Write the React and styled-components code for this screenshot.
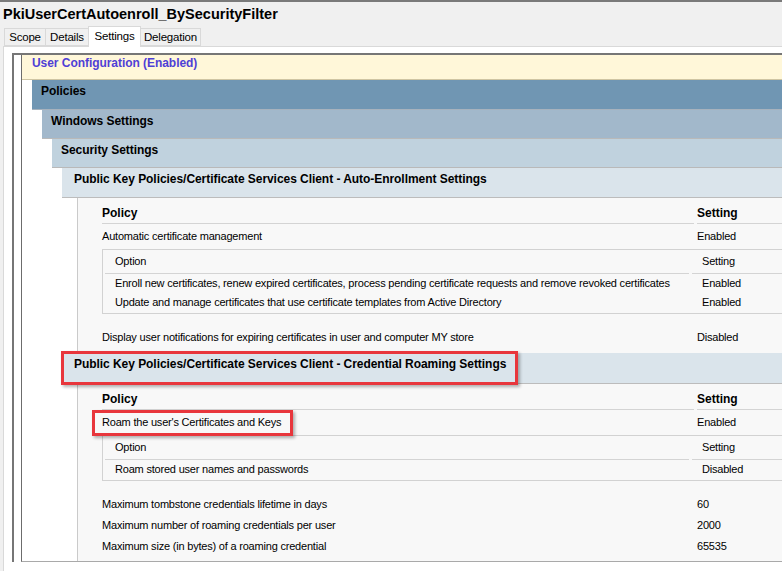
import React from 'react';
import styled, { createGlobalStyle } from 'styled-components';

const GlobalStyle = createGlobalStyle`
  html, body {
    margin: 0;
    padding: 0;
    background: #f0f0f0;
    overflow: hidden;
  }
  body {
    font-family: 'Liberation Sans', Arial, sans-serif;
    color: #000;
  }
`;

const autoEnroll = {
  policies: [{ name: 'Automatic certificate management', setting: 'Enabled' }],
  options: [
    {
      name: 'Enroll new certificates, renew expired certificates, process pending certificate requests and remove revoked certificates',
      setting: 'Enabled',
    },
    { name: 'Update and manage certificates that use certificate templates from Active Directory', setting: 'Enabled' },
  ],
  after: [{ name: 'Display user notifications for expiring certificates in user and computer MY store', setting: 'Disabled' }],
};

const roaming = {
  options: [{ name: 'Roam stored user names and passwords', setting: 'Disabled' }],
  after: [
    { name: 'Maximum tombstone credentials lifetime in days', setting: '60' },
    { name: 'Maximum number of roaming credentials per user', setting: '2000' },
    { name: 'Maximum size (in bytes) of a roaming credential', setting: '65535' },
  ],
};

const tabs = [
  { label: 'Scope', width: 42 },
  { label: 'Details', width: 44 },
  { label: 'Settings', width: 53 },
  { label: 'Delegation', width: 61 },
];

const OptionTable = ({ rows }) => (
  <OptionBox>
    <OptionGrid>
      <OptionHead>Option</OptionHead>
      <OptionHead>Setting</OptionHead>
      {rows.map((r) => (
        <React.Fragment key={r.name}>
          <OptionCell>{r.name}</OptionCell>
          <OptionCell>{r.setting}</OptionCell>
        </React.Fragment>
      ))}
    </OptionGrid>
  </OptionBox>
);

const App = () => {
  return (
    <Page>
      <GlobalStyle />
      <TitleBar>PkiUserCertAutoenroll_BySecurityFilter</TitleBar>
      <TabStrip>
        {tabs.map((t) => (
          <Tab key={t.label} $width={t.width} $active={t.label === 'Settings'}>{t.label}</Tab>
        ))}
      </TabStrip>
      <Panel>
        <Frame>
          <Tree>
            <Band $tone="user">User Configuration (Enabled)</Band>
            <Indent>
              <Band $tone="l1">Policies</Band>
              <Indent>
                <Band $tone="l2">Windows Settings</Band>
                <Indent>
                  <Band $tone="l3">Security Settings</Band>
                  <Indent>
                    <Band $tone="l4">Public Key Policies/Certificate Services Client - Auto-Enrollment Settings</Band>
                    <Body>
                      <PolicyGrid>
                        <HeadCell>Policy</HeadCell>
                        <HeadCell>Setting</HeadCell>
                        {autoEnroll.policies.map((r) => (
                          <React.Fragment key={r.name}>
                            <Cell>{r.name}</Cell>
                            <Cell>{r.setting}</Cell>
                          </React.Fragment>
                        ))}
                      </PolicyGrid>
                      <OptionTable rows={autoEnroll.options} />
                      <PlainGrid $gap={11}>
                        {autoEnroll.after.map((r) => (
                          <React.Fragment key={r.name}>
                            <Cell>{r.name}</Cell>
                            <Cell>{r.setting}</Cell>
                          </React.Fragment>
                        ))}
                      </PlainGrid>
                    </Body>

                    <Band $tone="l4" $tall>
                      Public Key Policies/Certificate Services Client - Credential Roaming Settings
                      <Highlight $left={-1} $top={-2} $width={457} $height={34} />
                    </Band>
                    <Body $last>
                      <PolicyGrid>
                        <HeadCell>Policy</HeadCell>
                        <HeadCell>Setting</HeadCell>
                        <Cell>
                          Roam the user's Certificates and Keys
                          <Highlight $left={-10} $top={0} $width={201} $height={26} />
                        </Cell>
                        <Cell>Enabled</Cell>
                      </PolicyGrid>
                      <OptionTable rows={roaming.options} />
                      <PlainGrid $gap={13} $row={21}>
                        {roaming.after.map((r) => (
                          <React.Fragment key={r.name}>
                            <Cell>{r.name}</Cell>
                            <Cell>{r.setting}</Cell>
                          </React.Fragment>
                        ))}
                      </PlainGrid>
                    </Body>
                  </Indent>
                </Indent>
              </Indent>
            </Indent>
          </Tree>
        </Frame>
      </Panel>
    </Page>
  );
};

const Page = styled.div`
  width: 782px;
  height: 571px;
  overflow: hidden;
  border-top: 2px solid #7a7a7a;
  box-sizing: border-box;
  background: #f0f0f0;
`;

const TitleBar = styled.div`
  height: 23px;
  padding: 3px 0 0 3px;
  box-sizing: border-box;
  font-size: 14.5px;
  font-weight: 700;
  line-height: 18px;
  white-space: nowrap;
`;

const TabStrip = styled.div`
  display: flex;
  align-items: flex-end;
  height: 21px;
  padding-left: 5px;
`;

const Tab = styled.div`
  width: ${(p) => p.$width}px;
  height: ${(p) => (p.$active ? '21px' : '18px')};
  margin-bottom: ${(p) => (p.$active ? '-1px' : '0')};
  margin-left: -1px;
  box-sizing: border-box;
  border: 1px solid #d9d9d9;
  border-bottom: ${(p) => (p.$active ? 'none' : '1px solid #d9d9d9')};
  background: ${(p) => (p.$active ? '#ffffff' : '#f0f0f0')};
  font-size: 11.5px;
  letter-spacing: -0.2px;
  text-align: center;
  line-height: ${(p) => (p.$active ? '18px' : '17px')};
  white-space: nowrap;
  position: relative;
  z-index: ${(p) => (p.$active ? 1 : 0)};
`;

const Panel = styled.div`
  margin-left: 3px;
  height: 560px;
  border-top: 1px solid #d9d9d9;
  border-left: 1px solid #d9d9d9;
  background: #ffffff;
  padding: 6px 0 0 8px;
`;

const Frame = styled.div`
  width: 1000px;
  border-left: 2px solid #767676;
  border-top: 2px solid #767676;
  padding-left: 7px;
  background: #ffffff;
`;

const Tree = styled.div`
  border-left: 1px solid #6c6c6c;
  border-bottom: 1px solid #a9a9a9;
`;

const Indent = styled.div`
  margin-left: 10px;
`;

const tones = {
  user: { bg: '#fff7d9', color: '#4f3fd6', pad: '1px 0 0 10px', h: 25, line: '#cfc5a3' },
  l1: { bg: '#7096b3', color: '#000', pad: '4px 0 0 9px', h: 30, line: '#a7b2bd' },
  l2: { bg: '#a2b8cb', color: '#000', pad: '4px 0 0 9px', h: 29, line: '#b9b9b9' },
  l3: { bg: '#c0d2de', color: '#000', pad: '4px 0 0 9px', h: 29, line: '#b9b9b9' },
  l4: { bg: '#dae4eb', color: '#000', pad: '4px 0 0 12px', h: 30, line: '#bcbcbc' },
};

const Band = styled.div`
  position: relative;
  height: ${(p) => tones[p.$tone].h + (p.$tall ? 1 : 0)}px;
  box-sizing: border-box;
  padding: ${(p) => tones[p.$tone].pad};
  background: ${(p) => tones[p.$tone].bg};
  color: ${(p) => tones[p.$tone].color};
  border-bottom: 1px solid ${(p) => tones[p.$tone].line};
  font-size: 12px;
  font-weight: 700;
  line-height: 15px;
  letter-spacing: -0.05px;
  white-space: nowrap;
`;

const Body = styled.div`
  margin-left: 15px;
  border-left: 1px solid #cacaca;
  background: #f8f8f8;
  padding: 6px 0 ${(p) => (p.$last ? '4px' : '3px')} 24px;
  font-size: 11px;
  letter-spacing: -0.2px;
`;

const PolicyGrid = styled.div`
  display: grid;
  grid-template-columns: 592px 1fr;
  column-gap: 3px;
`;

const HeadCell = styled.div`
  height: 20px;
  box-sizing: border-box;
  border-bottom: 1px solid #d4d4d4;
  font-size: 12px;
  font-weight: 700;
  letter-spacing: 0;
  line-height: 19px;
`;

const Cell = styled.div`
  position: relative;
  height: 25px;
  line-height: 25px;
  white-space: nowrap;
`;

const PlainGrid = styled.div`
  display: grid;
  grid-template-columns: 592px 1fr;
  column-gap: 3px;
  margin-top: ${(p) => p.$gap}px;
  grid-auto-rows: ${(p) => p.$row || 25}px;

  & > div {
    height: auto;
    line-height: ${(p) => p.$row || 25}px;
  }
`;

const OptionBox = styled.div`
  border: 1px solid #d2d2d2;
  padding: 0 0 1px 2px;
`;

const OptionGrid = styled.div`
  display: grid;
  grid-template-columns: 584px 1fr;
  column-gap: 3px;
`;

const OptionHead = styled.div`
  height: 24px;
  box-sizing: border-box;
  border-bottom: 1px solid #d4d4d4;
  padding-left: 10px;
  line-height: 23px;
  white-space: nowrap;
`;

const OptionCell = styled.div`
  height: 19px;
  padding-left: 10px;
  line-height: 19px;
  white-space: nowrap;
`;

const Highlight = styled.span`
  position: absolute;
  left: ${(p) => p.$left}px;
  top: ${(p) => p.$top}px;
  width: ${(p) => p.$width}px;
  height: ${(p) => p.$height}px;
  box-sizing: border-box;
  border: 3px solid #e8363c;
  box-shadow: 2px 2px 3px rgba(0, 0, 0, 0.3);
  pointer-events: none;
`;

export default App;
